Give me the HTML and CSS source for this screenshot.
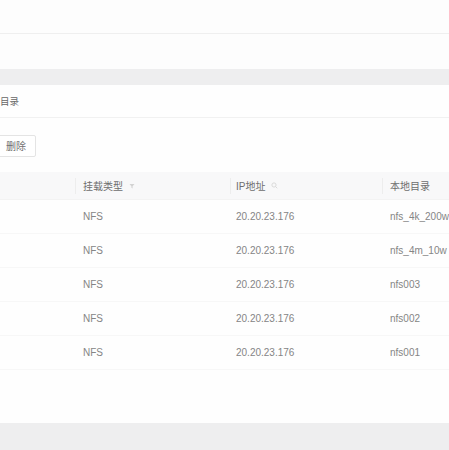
FILE: index.html
```html
<!DOCTYPE html>
<html lang="zh">
<head>
<meta charset="utf-8">
<title>挂载目录</title>
<link rel="stylesheet" href="styles.css">
</head>
<body>
<div class="viewport">
  <div class="page">
    <div class="topbar"></div>
    <div class="crumbs"></div>
    <div class="band"></div>
    <div class="card">
      <div class="card-title">目录</div>
      <div class="toolbar">
        <button class="btn">删除</button>
      </div>
      <div class="table">
        <div class="row head">
          <div class="cell c1"></div>
          <div class="cell c2">挂载类型
            <svg class="ico" width="6" height="6" viewBox="0 0 6 6"><path d="M0.5 1h5L3.6 3.3V5.4L2.4 4.8V3.3z" fill="#d3d3d3"/></svg>
          </div>
          <div class="cell c3">IP地址
            <svg class="ico" width="7" height="7" viewBox="0 0 7 7"><circle cx="3" cy="3" r="2.1" fill="none" stroke="#d6d6d6" stroke-width="0.9"/><path d="M4.5 4.5L6.3 6.3" stroke="#d6d6d6" stroke-width="0.9"/></svg>
          </div>
          <div class="cell c4">本地目录</div>
        </div>
        <div class="row">
          <div class="cell c1"></div><div class="cell c2">NFS</div><div class="cell c3">20.20.23.176</div><div class="cell c4">nfs_4k_200w</div>
        </div>
        <div class="row">
          <div class="cell c1"></div><div class="cell c2">NFS</div><div class="cell c3">20.20.23.176</div><div class="cell c4">nfs_4m_10w</div>
        </div>
        <div class="row">
          <div class="cell c1"></div><div class="cell c2">NFS</div><div class="cell c3">20.20.23.176</div><div class="cell c4">nfs003</div>
        </div>
        <div class="row">
          <div class="cell c1"></div><div class="cell c2">NFS</div><div class="cell c3">20.20.23.176</div><div class="cell c4">nfs002</div>
        </div>
        <div class="row">
          <div class="cell c1"></div><div class="cell c2">NFS</div><div class="cell c3">20.20.23.176</div><div class="cell c4">nfs001</div>
        </div>
      </div>
      <div class="card-foot"></div>
    </div>
    <div class="band bottom"></div>
  </div>
</div>
</body>
</html>
```
FILE: styles.css
```css
html, body {
  margin: 0;
  padding: 0;
  background: #fdfdfd;
}
.viewport {
  width: 449px;
  height: 450px;
  overflow: hidden;
}
.page {
  width: 640px;
  margin-left: -60px;
  font-family: "Liberation Sans", "Noto Sans CJK SC", sans-serif;
  font-size: 10px;
  color: #858585;
}
.topbar {
  height: 33px;
  border-bottom: 1px solid #efefef;
  background: #fdfdfd;
}
.crumbs {
  height: 35px;
  background: #fdfdfd;
}
.band {
  height: 16px;
  background: #eeeeef;
}
.band.bottom {
  height: 30px;
}
.card {
  background: #fefefe;
}
.card-title {
  height: 32px;
  line-height: 32px;
  border-bottom: 1px solid #f1f1f1;
  padding-left: 60px;
  color: #666;
  font-size: 9.5px;
  font-family: "Noto Sans CJK SC", sans-serif;
}
.toolbar {
  display: flex;
  gap: 6px;
  padding: 17px 0 15px 55px;
}
.btn {
  height: 22px;
  padding: 0 9px 0 10px;
  border: 1px solid #e4e4e4;
  border-radius: 2px;
  background: #fff;
  color: #707070;
  font-size: 10px;
  font-family: "Noto Sans CJK SC", sans-serif;
  line-height: 20px;
}
.table {
  display: flex;
  flex-direction: column;
}
.row {
  display: flex;
  height: 34px;
  align-items: center;
  border-bottom: 1px solid #f7f7f7;
  box-sizing: border-box;
}
.row.head {
  height: 28px;
  background: #f8f8f9;
  border-bottom: 1px solid #f3f3f3;
  color: #6e6e6e;
}
.cell {
  box-sizing: border-box;
  padding-left: 7px;
  position: relative;
  display: flex;
  align-items: center;
  gap: 6px;
  white-space: nowrap;
}
.c1 { width: 135px; }
.c2 { width: 155px; padding-left: 8px; }
.c3 { width: 152px; padding-left: 6px; }
.c4 { flex: 1; padding-left: 8px; }
.head .c2::before,
.head .c3::before,
.head .c4::before {
  content: "";
  position: absolute;
  left: 0;
  top: 50%;
  width: 1px;
  height: 16px;
  margin-top: -8px;
  background: #ededed;
}
.ico {
  display: block;
}
.card-foot {
  height: 53px;
}
```
